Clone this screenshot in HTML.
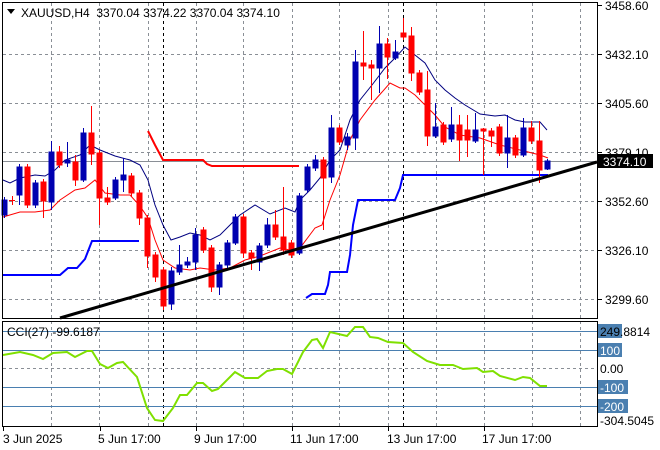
<!DOCTYPE html>
<html><head><style>
html,body{margin:0;padding:0;background:#fff;width:660px;height:450px;overflow:hidden}
svg{display:block;font-family:"Liberation Sans",Tahoma,sans-serif;font-size:12px}
</style></head><body>
<svg width="660" height="450" viewBox="0 0 660 450" xmlns="http://www.w3.org/2000/svg">
<rect width="660" height="450" fill="#fff"/>
<g stroke="#8a8f96" stroke-width="1" stroke-dasharray="3,3" fill="none">
<line x1="3" x2="597" y1="54.5" y2="54.5"/><line x1="3" x2="597" y1="103.5" y2="103.5"/>
<line x1="3" x2="597" y1="152.5" y2="152.5"/><line x1="3" x2="597" y1="201.5" y2="201.5"/>
<line x1="3" x2="597" y1="250.5" y2="250.5"/><line x1="3" x2="597" y1="299.5" y2="299.5"/>
<line x1="3" x2="597" y1="368.5" y2="368.5"/>
<g>
<line x1="51.5" x2="51.5" y1="3" y2="426"/><line x1="99.5" x2="99.5" y1="3" y2="426"/>
<line x1="148.5" x2="148.5" y1="3" y2="426"/><line x1="196.5" x2="196.5" y1="3" y2="426"/>
<line x1="243.5" x2="243.5" y1="3" y2="426"/><line x1="292.5" x2="292.5" y1="3" y2="426"/>
<line x1="339.5" x2="339.5" y1="3" y2="426"/><line x1="388.5" x2="388.5" y1="3" y2="426"/>
<line x1="436.5" x2="436.5" y1="3" y2="426"/><line x1="484.5" x2="484.5" y1="3" y2="426"/>
<line x1="532.5" x2="532.5" y1="3" y2="426"/><line x1="580.5" x2="580.5" y1="3" y2="426"/>
</g>
</g>
<g stroke="#000" stroke-dasharray="3,3"><line x1="163.5" x2="163.5" y1="3" y2="426"/><line x1="403.5" x2="403.5" y1="3" y2="426"/></g>
<line x1="3" x2="597" y1="161.5" y2="161.5" stroke="#8a8f96"/>
<g stroke="#4a7fb0"><line x1="3" x2="597" y1="331.5" y2="331.5"/><line x1="3" x2="597" y1="350.5" y2="350.5"/><line x1="3" x2="597" y1="387.5" y2="387.5"/><line x1="3" x2="597" y1="406.5" y2="406.5"/></g>
<polyline fill="none" stroke="#ff0000" stroke-width="2" points="148,131 155,145 163,160 203,160 207,164 212,166 299,166"/>
<polyline fill="none" stroke="#0000ff" stroke-width="2" points="3,275 60,275 68,268 77,268 85,259 92,241 139,241"/>
<polyline fill="none" stroke="#0000ff" stroke-width="2" points="306,298 312,294 325,294 328,285 330,272 347,272 350,255 353,225 358,200 395,200 400,188 403,175 548,175"/>
<polyline fill="none" stroke="#000080" stroke-width="1" points="3,180 10,183 20,178 35,175 45,176 55,170 65,160 80,155 90,145 100,150 115,156 130,160 140,165 148,180 155,205 163,225 171,240 180,237 190,233 200,235 210,240 220,235 230,225 240,215 255,205 270,214 285,208 295,212 300,200 310,190 320,178 330,160 340,150 350,120 360,100 372,85 385,68 395,58 405,47 415,55 425,63 435,80 445,90 455,98 465,105 480,114 495,116 505,115 515,120 525,122 540,122 547,130"/>
<polyline fill="none" stroke="#ff0000" stroke-width="1" points="3,217 20,212 35,212 50,210 60,200 75,190 85,188 95,180 105,193 120,195 130,195 140,206 148,218 155,240 163,260 175,268 190,270 200,268 215,270 230,268 245,260 260,256 280,248 290,250 300,248 315,228 322,225 330,200 340,175 350,140 360,120 375,100 390,83 400,88 405,88 415,95 425,105 435,115 445,127 460,135 480,138 500,145 520,150 540,155 548,158"/>
<g stroke-width="1">
<g stroke="#0000b0" fill="#0000b0">
<line x1="4.5" x2="4.5" y1="197" y2="218"/><rect x="2" y="200" width="5" height="15"/>
<line x1="19.5" x2="19.5" y1="164" y2="205"/><rect x="17" y="167" width="5" height="28"/>
<line x1="35.5" x2="35.5" y1="180" y2="208"/><rect x="33" y="183" width="5" height="22"/>
<line x1="51.5" x2="51.5" y1="141" y2="210"/><rect x="49" y="152" width="5" height="50"/>
<line x1="67.5" x2="67.5" y1="142" y2="167"/><rect x="65" y="160" width="5" height="3"/>
<line x1="83.5" x2="83.5" y1="128" y2="182"/><rect x="81" y="133" width="5" height="47"/>
<line x1="115.5" x2="115.5" y1="177" y2="200"/><rect x="113" y="180" width="5" height="18"/>
<line x1="123.5" x2="123.5" y1="158" y2="192"/><rect x="121" y="175" width="5" height="5"/>
<line x1="171.5" x2="171.5" y1="267" y2="310"/><rect x="169" y="271" width="5" height="33"/>
<line x1="179.5" x2="179.5" y1="245" y2="275"/><rect x="177" y="265" width="5" height="7"/>
<line x1="187.5" x2="187.5" y1="257" y2="268"/><rect x="185" y="262" width="5" height="3"/>
<line x1="195.5" x2="195.5" y1="228" y2="270"/><rect x="193" y="235" width="5" height="27"/>
<line x1="219.5" x2="219.5" y1="262" y2="295"/><rect x="217" y="265" width="5" height="22"/>
<line x1="227.5" x2="227.5" y1="240" y2="268"/><rect x="225" y="243" width="5" height="22"/>
<line x1="235.5" x2="235.5" y1="214" y2="245"/><rect x="233" y="217" width="5" height="26"/>
<line x1="259.5" x2="259.5" y1="243" y2="271"/><rect x="257" y="246" width="5" height="16"/>
<line x1="267.5" x2="267.5" y1="218" y2="248"/><rect x="265" y="225" width="5" height="20"/>
<line x1="299.5" x2="299.5" y1="193" y2="255"/><rect x="297" y="196" width="5" height="57"/>
<line x1="307.5" x2="307.5" y1="164" y2="193"/><rect x="305" y="167" width="5" height="23"/>
<line x1="315.5" x2="315.5" y1="155" y2="171"/><rect x="313" y="160" width="5" height="8"/>
<line x1="331.5" x2="331.5" y1="115" y2="183"/><rect x="329" y="128" width="5" height="49"/>
<line x1="347.5" x2="347.5" y1="133" y2="150"/><rect x="345" y="137" width="5" height="8"/>
<line x1="355.5" x2="355.5" y1="50" y2="150"/><rect x="353" y="62" width="5" height="76"/>
<line x1="379.5" x2="379.5" y1="26" y2="93"/><rect x="377" y="44" width="5" height="24"/>
<line x1="395.5" x2="395.5" y1="40" y2="60"/><rect x="393" y="52" width="5" height="6"/>
<line x1="435.5" x2="435.5" y1="103" y2="138"/><rect x="433" y="127" width="5" height="9"/>
<line x1="451.5" x2="451.5" y1="107" y2="142"/><rect x="449" y="125" width="5" height="14"/>
<line x1="475.5" x2="475.5" y1="113" y2="143"/><rect x="473" y="130" width="5" height="11"/>
<line x1="507.5" x2="507.5" y1="115" y2="168"/><rect x="505" y="138" width="5" height="15"/>
<line x1="523.5" x2="523.5" y1="118" y2="157"/><rect x="521" y="128" width="5" height="27"/>
<line x1="547.5" x2="547.5" y1="159" y2="170"/><rect x="545" y="161" width="5" height="8"/>
</g>
<g stroke="#ff0000" fill="#ff0000">
<line x1="9" x2="15" y1="200.5" y2="200.5"/><line x1="12.5" x2="12.5" y1="196" y2="205"/>
<line x1="27.5" x2="27.5" y1="164" y2="208"/><rect x="25" y="167" width="5" height="38"/>
<line x1="43.5" x2="43.5" y1="179" y2="218"/><rect x="41" y="182" width="5" height="19"/>
<line x1="59.5" x2="59.5" y1="146" y2="168"/><rect x="57" y="152" width="5" height="13"/>
<line x1="75.5" x2="75.5" y1="155" y2="186"/><rect x="73" y="162" width="5" height="18"/>
<line x1="91.5" x2="91.5" y1="106" y2="165"/><rect x="89" y="133" width="5" height="21"/>
<line x1="99.5" x2="99.5" y1="150" y2="225"/><rect x="97" y="153" width="5" height="45"/>
<line x1="107.5" x2="107.5" y1="187" y2="205"/><rect x="105" y="198" width="5" height="4"/>
<line x1="131.5" x2="131.5" y1="173" y2="197"/><rect x="129" y="176" width="5" height="17"/>
<line x1="139.5" x2="139.5" y1="190" y2="225"/><rect x="137" y="193" width="5" height="25"/>
<line x1="147.5" x2="147.5" y1="215" y2="268"/><rect x="145" y="218" width="5" height="38"/>
<line x1="155.5" x2="155.5" y1="252" y2="282"/><rect x="153" y="255" width="5" height="22"/>
<line x1="163.5" x2="163.5" y1="267" y2="310"/><rect x="161" y="270" width="5" height="36"/>
<line x1="203.5" x2="203.5" y1="227" y2="253"/><rect x="201" y="230" width="5" height="20"/>
<line x1="211.5" x2="211.5" y1="245" y2="292"/><rect x="209" y="248" width="5" height="39"/>
<line x1="243.5" x2="243.5" y1="214" y2="258"/><rect x="241" y="217" width="5" height="36"/>
<line x1="251.5" x2="251.5" y1="250" y2="270"/><rect x="249" y="253" width="5" height="5"/>
<line x1="275.5" x2="275.5" y1="210" y2="240"/><rect x="273" y="225" width="5" height="12"/>
<line x1="283.5" x2="283.5" y1="187" y2="255"/><rect x="281" y="237" width="5" height="13"/>
<line x1="291.5" x2="291.5" y1="240" y2="258"/><rect x="289" y="243" width="5" height="12"/>
<line x1="323.5" x2="323.5" y1="157" y2="230"/><rect x="321" y="160" width="5" height="18"/>
<line x1="339.5" x2="339.5" y1="125" y2="145"/><rect x="337" y="128" width="5" height="14"/>
<line x1="363.5" x2="363.5" y1="31" y2="80"/><rect x="361" y="63" width="5" height="3"/>
<line x1="371.5" x2="371.5" y1="60" y2="100"/><rect x="369" y="65" width="5" height="3"/>
<line x1="387.5" x2="387.5" y1="38" y2="79"/><rect x="385" y="44" width="5" height="13"/>
<line x1="403.5" x2="403.5" y1="18" y2="40"/><rect x="401" y="33" width="5" height="4"/>
<line x1="411.5" x2="411.5" y1="27" y2="81"/><rect x="409" y="36" width="5" height="37"/>
<line x1="419.5" x2="419.5" y1="70" y2="95"/><rect x="417" y="73" width="5" height="19"/>
<line x1="427.5" x2="427.5" y1="71" y2="146"/><rect x="425" y="90" width="5" height="46"/>
<line x1="443.5" x2="443.5" y1="122" y2="145"/><rect x="441" y="125" width="5" height="17"/>
<line x1="459.5" x2="459.5" y1="115" y2="161"/><rect x="457" y="125" width="5" height="15"/>
<line x1="467.5" x2="467.5" y1="115" y2="157"/><rect x="465" y="130" width="5" height="10"/>
<line x1="483.5" x2="483.5" y1="128" y2="175"/><rect x="481" y="129" width="5" height="2"/>
<line x1="491.5" x2="491.5" y1="128" y2="147"/><rect x="489" y="131" width="5" height="5"/>
<line x1="499.5" x2="499.5" y1="124" y2="156"/><rect x="497" y="127" width="5" height="26"/>
<line x1="515.5" x2="515.5" y1="135" y2="158"/><rect x="513" y="138" width="5" height="17"/>
<line x1="531.5" x2="531.5" y1="121" y2="144"/><rect x="529" y="128" width="5" height="13"/>
<line x1="539.5" x2="539.5" y1="121" y2="183"/><rect x="537" y="141" width="5" height="29"/>
</g>
</g>
<line x1="60" y1="318" x2="597" y2="162" stroke="#000" stroke-width="3"/>
<polyline fill="none" stroke="#7fe000" stroke-width="2" points="3,355 20,352 33,355 43,359 53,353 67,352 75,357 87,351 92,351 100,364 108,368 117,363 123,362 137,377 147,408 155,420 163,421 173,408 180,395 187,395 197,383 203,383 212,391 218,389 235,372 245,378 258,378 267,371 277,369 283,369 292,374 303,352 312,340 317,339 323,348 330,332 347,336 355,327 363,327 370,337 378,338 388,342 403,343 413,352 427,361 440,365 453,365 463,369 477,368 483,372 493,371 500,376 515,380 523,377 530,378 540,386 547,386"/>
<g fill="none" stroke="#000" stroke-width="1">
<rect x="2.5" y="2.5" width="595" height="316"/>
<rect x="2.5" y="321.5" width="595" height="105"/>
</g>
<g stroke="#000">
<line x1="597" x2="602" y1="5.5" y2="5.5"/><line x1="597" x2="602" y1="54.5" y2="54.5"/><line x1="597" x2="602" y1="103.5" y2="103.5"/><line x1="597" x2="602" y1="152.5" y2="152.5"/><line x1="597" x2="602" y1="201.5" y2="201.5"/><line x1="597" x2="602" y1="250.5" y2="250.5"/><line x1="597" x2="602" y1="299.5" y2="299.5"/>
<line x1="3.5" x2="3.5" y1="427" y2="431"/><line x1="100.5" x2="100.5" y1="427" y2="431"/><line x1="196.5" x2="196.5" y1="427" y2="431"/><line x1="292.5" x2="292.5" y1="427" y2="431"/><line x1="388.5" x2="388.5" y1="427" y2="431"/><line x1="484.5" x2="484.5" y1="427" y2="431"/>
</g>
<path d="M7,9 L15,9 L11,14 Z" fill="#000"/>
<text x="21" y="17" fill="#000" xml:space="preserve">XAUUSD,H4  3370.04 3374.22 3370.04 3374.10</text>
<g fill="#000">
<text x="605" y="10">3458.60</text><text x="605" y="59">3432.10</text><text x="605" y="108">3405.60</text><text x="605" y="157">3379.10</text><text x="605" y="206">3352.60</text><text x="605" y="255">3326.10</text><text x="605" y="304">3299.60</text>
</g>
<rect x="598" y="154" width="55" height="14" fill="#000"/>
<text x="603" y="166" fill="#fff">3374.10</text>
<text x="7" y="336" fill="#000">CCI(27) -99.6187</text>
<rect x="598" y="324" width="24" height="14" fill="#4a7fb0"/>
<rect x="598" y="343" width="24" height="14" fill="#4a7fb0"/>
<rect x="598" y="380" width="30" height="14" fill="#4a7fb0"/>
<rect x="598" y="399" width="30" height="14" fill="#4a7fb0"/>
<text x="600" y="336" fill="#000">249.8814</text>
<text x="600" y="355" fill="#fff">100</text>
<text x="600" y="373" fill="#000">0.00</text>
<text x="600" y="392" fill="#fff">-100</text>
<text x="600" y="411" fill="#fff">-200</text>
<text x="600" y="425" fill="#000">-304.5045</text>
<g fill="#000">
<text x="3" y="443">3 Jun 2025</text><text x="98" y="443">5 Jun 17:00</text><text x="194" y="443">9 Jun 17:00</text><text x="290" y="443">11 Jun 17:00</text><text x="387" y="443">13 Jun 17:00</text><text x="482" y="443">17 Jun 17:00</text>
</g>
</svg>
</body></html>
